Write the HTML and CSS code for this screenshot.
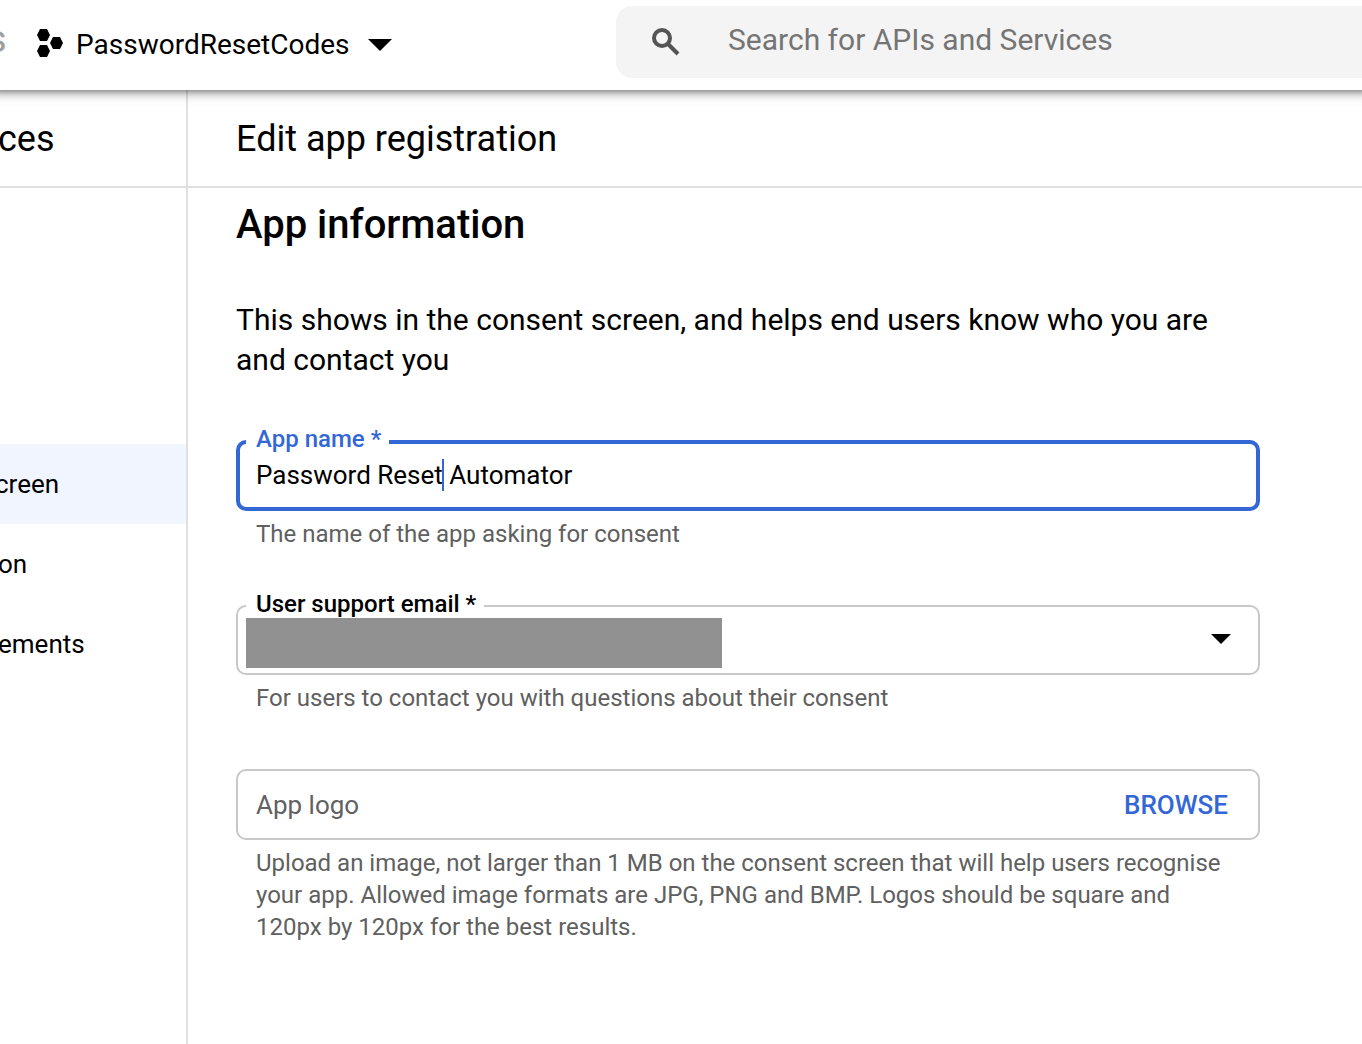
FILE: index.html
```html
<!DOCTYPE html>
<html lang="en">
<head>
<meta charset="utf-8">
<meta name="viewport" content="width=device-width, initial-scale=1">
<title>Edit app registration</title>
<link rel="stylesheet" href="styles.css">
</head>
<body>
<header class="topbar">
  <div class="topbar-start">
    <span class="brand">s</span>
    <button class="project" type="button">
      <svg class="project-icon" width="28" height="32" viewBox="0 0 28 32" aria-hidden="true">
        <path d="M5 0h7l3 6-3 6H5L2 6zM5 16h7l3 6-3 6H5l-3-6zM18 8h7l3 6-3 6h-7l-3-6z"/>
      </svg>
      <span>PasswordResetCodes</span>
      <svg class="project-arrow" width="24" height="12" viewBox="0 0 24 12" aria-hidden="true"><path d="M0 0h24L12 12z"/></svg>
    </button>
  </div>
  <label class="search">
    <svg class="search-icon" width="28" height="28" viewBox="0 0 28 28" aria-hidden="true">
      <circle cx="10" cy="10" r="8" fill="none" stroke="#545454" stroke-width="4"/>
      <path d="M15 15l11 11" fill="none" stroke="#545454" stroke-width="4"/>
    </svg>
    <input class="search-input" type="search" placeholder="Search for APIs and Services" aria-label="Search for APIs and Services">
  </label>
</header>
<div class="layout">
  <aside class="sidebar">
    <div class="bar sidebar-title">ces</div>
    <nav class="nav">
      <a class="nav-item nav-item-active" href="#consent">creen</a>
      <a class="nav-item" href="#verification">on</a>
      <a class="nav-item" href="#agreements">ements</a>
    </nav>
  </aside>
  <main class="main">
    <h1 class="bar page-title">Edit app registration</h1>
    <form class="form">
      <h2 class="section-title">App information</h2>
      <p class="intro">This shows in the consent screen, and helps end users know who you are and contact you</p>
      <div class="field">
        <div class="box box-focused">
          <label class="box-label" for="app-name">App name *</label>
          <input class="control" id="app-name" type="text" value="Password Reset Automator">
          <span class="caret"></span>
        </div>
        <p class="hint">The name of the app asking for consent</p>
      </div>
      <div class="field">
        <div class="box">
          <label class="box-label" for="support-email">User support email *</label>
          <select class="control" id="support-email"><option></option></select>
          <span class="redaction"></span>
          <svg class="select-arrow" width="20" height="10" viewBox="0 0 20 10" aria-hidden="true"><path d="M0 0h20L10 10z"/></svg>
        </div>
        <p class="hint">For users to contact you with questions about their consent</p>
      </div>
      <div class="field">
        <div class="box box-upload">
          <input class="control" type="text" placeholder="App logo" aria-label="App logo">
          <button class="browse" type="button">BROWSE</button>
        </div>
        <p class="hint">Upload an image, not larger than 1 MB on the consent screen that will help users recognise your app. Allowed image formats are JPG, PNG and BMP. Logos should be square and 120px by 120px for the best results.</p>
      </div>
    </form>
  </main>
</div>
</body>
</html>
```

FILE: styles.css
```css
* {
  box-sizing: border-box;
}

body {
  margin: 0;
  min-height: 100vh;
  display: flex;
  flex-direction: column;
  overflow-x: hidden;
  background: #fff;
  color: #000;
  font-family: Roboto, sans-serif;
}

h1, h2, p {
  margin: 0;
}

button, input, select {
  margin: 0;
  padding: 0;
  border: 0;
  background: none;
  color: inherit;
  font: inherit;
}

/* Top bar */
.topbar {
  position: relative;
  z-index: 1;
  display: flex;
  height: 90px;
  background: #fff;
  box-shadow: 0 -8px 12px 10px rgba(0, 0, 0, 0.35), 0 -10px 8px 10px rgba(0, 0, 0, 0.45);
}

.topbar-start {
  flex: 0 0 616px;
  display: flex;
  align-items: center;
}

.brand {
  width: 36px;
  display: flex;
  margin-left: -13px;
  margin-right: 12px;
  color: #9e9e9e;
  font-size: 38px;
  line-height: 40px;
  margin-bottom: 12px;
}

.project {
  display: flex;
  align-items: center;
  font-size: 28px;
  line-height: 32px;
}

.project-icon {
  margin-right: 13px;
}

.project-arrow {
  margin-left: 18px;
}

.search {
  flex: 1;
  display: flex;
  align-items: center;
  gap: 48px;
  height: 72px;
  margin-top: 6px;
  padding-left: 36px;
  border-radius: 16px 0 0 16px;
  background: #f4f4f4;
}

.search-input {
  flex: 1;
  min-width: 0;
  height: 40px;
  margin-bottom: 6px;
  outline: 0;
  font-size: 30px;
}

.search-input::placeholder {
  color: #757575;
  opacity: 1;
}

/* Page columns */
.layout {
  flex: 1;
  display: grid;
  grid-template-columns: 188px 1fr;
}

.bar {
  height: 98px;
  border-bottom: 2px solid #e0e0e0;
  font-size: 36px;
  font-weight: 400;
  line-height: 98px;
}

.sidebar {
  overflow: hidden;
  border-right: 2px solid #e0e0e0;
}

.sidebar-title {
  text-indent: -2px;
}

.nav {
  padding-top: 256px;
}

.nav-item {
  display: block;
  height: 80px;
  color: inherit;
  font-size: 26px;
  line-height: 80px;
  text-decoration: none;
  text-indent: -2px;
}

.nav-item-active {
  background: #f0f5ff;
  text-indent: -5px;
}

.page-title {
  padding-left: 48px;
}

/* Form */
.form {
  max-width: 1120px;
  padding: 13px 48px 48px;
}

.section-title {
  font-size: 40px;
  font-weight: 500;
  line-height: 48px;
}

.intro {
  margin: 51px 0 60px;
  font-size: 30px;
  line-height: 40px;
}

.field {
  margin-bottom: 55px;
}

.box {
  position: relative;
  display: flex;
  align-items: center;
  height: 70px;
  padding: 0 30px 0 18px;
  border: 2px solid #c8c8c8;
  border-radius: 10px;
}

.box-focused {
  height: 71px;
  padding: 0 28px 1px 16px;
  border: 4px solid #3367d6;
}

.box-upload {
  height: 71px;
}

.box-label {
  position: absolute;
  top: -19px;
  left: 8px;
  padding: 0 8px 0 10px;
  background: #fff;
  font-size: 24px;
  font-weight: 500;
  line-height: 32px;
}

.box-focused .box-label {
  top: -21px;
  left: 6px;
  color: #3367d6;
}

.control {
  flex: 1;
  min-width: 0;
  height: 40px;
  outline: 0;
  appearance: none;
  font-size: 26px;
}

.control::placeholder {
  color: #616161;
  opacity: 1;
}

.caret {
  position: absolute;
  top: 15px;
  left: 202px;
  width: 2px;
  height: 32px;
  background: #3367d6;
}

.redaction {
  position: absolute;
  top: 11px;
  left: 8px;
  width: 476px;
  height: 50px;
  background: #919191;
}

.select-arrow {
  position: absolute;
  top: 27px;
  right: 27px;
}

.browse {
  color: #3367d6;
  font-size: 26px;
  font-weight: 500;
}

.hint {
  margin-top: 7px;
  padding: 0 20px;
  color: #5f6060;
  font-size: 24px;
  line-height: 32px;
}
```
